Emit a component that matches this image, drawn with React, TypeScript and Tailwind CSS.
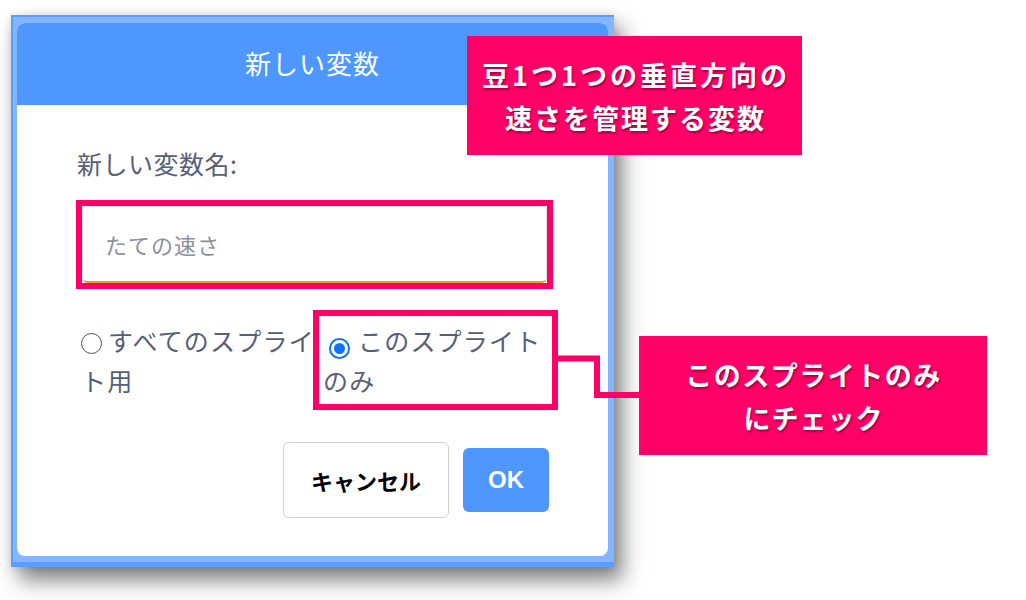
const jp = "font-['Noto_Sans_CJK_JP','Noto_Sans',sans-serif]";

function Radio({ checked }: { checked?: boolean }) {
  if (checked) {
    return (
      <span className="inline-flex w-[21px] h-[21px] rounded-full border-[2.5px] border-[#0b74ff] items-center justify-center align-[-3px] mr-[8px]">
        <span className="w-[11px] h-[11px] rounded-full bg-[#0b74ff]" />
      </span>
    );
  }
  return (
    <span className="inline-block w-[21px] h-[21px] rounded-full border-[1.5px] border-[#4a4f60] align-[-3px] mr-[6px]" />
  );
}

function Callout({ lines, className }: { lines: { text: string; tracking: string }[]; className: string }) {
  return (
    <div
      className={`absolute bg-[#ff0066] flex flex-col items-center justify-center text-white font-bold text-[27px] leading-[43px] [text-shadow:1px_2px_2px_rgba(0,0,0,0.35)] ${className}`}
    >
      {lines.map((l) => (
        <div key={l.text} className={l.tracking}>
          {l.text}
        </div>
      ))}
    </div>
  );
}

export default function App() {
  return (
    <div className={`relative w-[1026px] h-[600px] bg-white overflow-hidden pl-[11px] pt-[15px] ${jp}`}>
      {/* dialog frame */}
      <div className="w-[603px] h-[552px] bg-[#86b5ff] border-l-2 border-t-2 border-b-[5px] border-[#5c9dff] pl-[4px] pt-[6px] shadow-[8px_13px_20px_rgba(0,0,0,0.5),0_0_8px_rgba(0,0,0,0.12)]">
        <div className="w-[591px] h-[533px] rounded-[8px] bg-white overflow-hidden flex flex-col">
          <div className="h-[82px] shrink-0 bg-[#4d97ff] flex items-center justify-center text-white text-[26px] tracking-[1px] pb-[4px]">
            新しい変数
          </div>

          <div className="flex flex-col pl-[59px] pt-[41px] text-[#575e75]">
            <div className="text-[25px] leading-[34px] pl-[1px] tracking-[0.5px]">新しい変数名:</div>

            <div className="mt-[20px] w-[477px] border-[6px] border-[#ff0066]">
              <div className="h-[77px] rounded-[5px] border border-[#e3e5ea] border-b-[2px] border-b-[#eba21a] flex items-center pl-[22px] text-[22px] tracking-[1px] text-[#8c90a0]">
                たての速さ
              </div>
            </div>

            <div className="mt-[21px] flex text-[25px] leading-[40px] tracking-[1.2px] whitespace-nowrap">
              <div className="w-[237px] pl-[5px] pt-[10px]">
                <Radio />
                すべてのスプライ
                <br />
                ト用
              </div>
              <div className="w-[245px] h-[100px] border-[6px] border-[#ff0066] pl-[4px] pt-[4px]">
                <span className="ml-[6px]" />
                <Radio checked />
                このスプライト
                <br />
                のみ
              </div>
            </div>

            <div className="mt-[32px] flex items-center justify-end pr-[59px] gap-[14px]">
              <button className="w-[166px] h-[76px] rounded-[6px] border border-[#d2d2d2] bg-white text-black font-bold text-[22px]">
                キャンセル
              </button>
              <button className="w-[86px] h-[64px] rounded-[6px] bg-[#4d97ff] text-white font-bold text-[24px] font-['Liberation_Sans',sans-serif]">
                OK
              </button>
            </div>
          </div>
        </div>
      </div>

      {/* annotations */}
      <Callout
        className="left-[467px] top-[36px] w-[335px] h-[119px]"
        lines={[
          { text: "豆1つ1つの垂直方向の", tracking: "tracking-[3px] pl-[3px]" },
          { text: "速さを管理する変数", tracking: "tracking-[2px] pl-[2px]" },
        ]}
      />
      <Callout
        className="left-[639px] top-[336px] w-[348px] h-[119px]"
        lines={[
          { text: "このスプライトのみ", tracking: "tracking-[1.5px] pl-[1px]" },
          { text: "にチェック", tracking: "tracking-[1px] pl-[1px]" },
        ]}
      />
      <svg className="absolute left-0 top-0" width="1026" height="600" viewBox="0 0 1026 600" fill="none">
        <polyline points="556,358.5 597,358.5 597,395 640,395" stroke="#ff0066" strokeWidth="6" />
      </svg>
    </div>
  );
}
